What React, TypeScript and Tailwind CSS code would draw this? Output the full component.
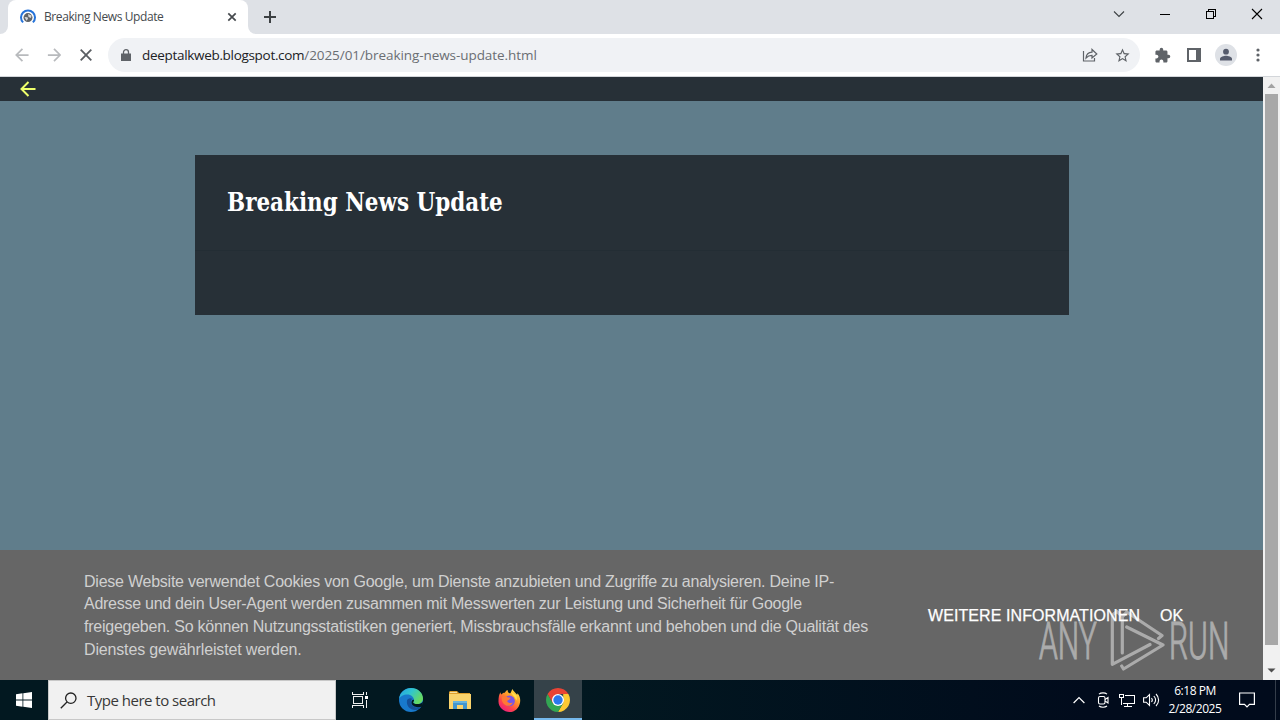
import type { ReactNode } from "react";

const ui = "font-['Open_Sans','Noto_Sans',sans-serif]";

function Arrow({ className, flip = false }: { className: string; flip?: boolean }) {
  return (
    <svg viewBox="0 0 16 16" className={className} fill="none" stroke="currentColor" strokeWidth="2">
      {flip ? <path d="M1 8h13M8 1l7 7-7 7" /> : <path d="M15.500 8H2M8.500 1l-7 7 7 7" />}
    </svg>
  );
}

function TitleBar() {
  return (
    <div className="flex h-[34px] shrink-0 items-stretch bg-[#dee1e6]">
      <div className="flex w-2 items-end bg-white">
        <div className="h-full w-2 rounded-br-lg bg-[#dee1e6]" />
      </div>
      <div className="w-60 bg-[#dee1e6]">
        <div className="flex h-full items-center rounded-t-lg bg-white pl-3 pr-[11px]">
          <svg viewBox="0 0 16 16" className="size-4 shrink-0">
            <path d="M3.1 13.4A7 7 0 1 1 12.9 13.4" fill="none" stroke="#2673d9" strokeWidth="2" />
            <circle cx="8" cy="8.600" r="4.500" fill="#5f6368" />
            <path d="M4.500 8l3 .3.5 1.500-1.500 2zM8 5l3.500 1.500-.5 2.500-2.500-1z" fill="#d5d7da" />
          </svg>
          <span className={`${ui} ml-2 flex-1 whitespace-nowrap text-[12px] tracking-[-0.400px] text-[#45494d]`}>
            Breaking News Update
          </span>
          <svg viewBox="0 0 10 10" className="size-[10px]" stroke="#45494d" strokeWidth="1.700">
            <path d="M1.300 1.300l7.400 7.400M8.700 1.300L1.300 8.700" />
          </svg>
        </div>
      </div>
      <div className="flex w-2 bg-white">
        <div className="h-full w-2 rounded-bl-lg bg-[#dee1e6]" />
      </div>
      <svg viewBox="0 0 12 12" className="ml-2 mt-[11px] size-3" stroke="#3c4043" strokeWidth="2">
        <path d="M6 0v12M0 6h12" />
      </svg>
      <div className="ml-auto flex pr-[17px] pt-[8px]">
        <svg viewBox="0 0 12 12" className="mr-[34px] size-3" fill="none" stroke="#3c4043" strokeWidth="1.100">
          <path d="M1 3.500l5 5 5-5" />
        </svg>
        <svg viewBox="0 0 12 12" className="mr-[34px] size-3" stroke="#000" shapeRendering="crispEdges">
          <path d="M1 6.500h10" />
        </svg>
        <svg viewBox="0 0 12 12" className="mr-[34px] size-3" fill="none" stroke="#000" shapeRendering="crispEdges">
          <path d="M1.500 3.500h7v7h-7zM3.500 3.500v-2h7v7h-2" />
        </svg>
        <svg viewBox="0 0 12 12" className="size-3" stroke="#000" strokeWidth="1.100">
          <path d="M1 1l10 10M11 1L1 11" />
        </svg>
      </div>
    </div>
  );
}

function Toolbar() {
  return (
    <div className="flex h-[43px] shrink-0 items-center border-b border-[#d3d6da] bg-white pl-[15px] pr-[13px]">
      <Arrow className="mr-[18px] size-[14px] text-[#b8babd]" />
      <Arrow flip className="mr-[19px] size-[14px] text-[#b8babd]" />
      <svg viewBox="0 0 12 12" className="mr-4 size-3" stroke="#5a5e63" strokeWidth="1.800">
        <path d="M.7.7l10.600 10.600M11.300.7L.7 11.300" />
      </svg>
      <div className="flex h-[34px] w-[1032px] items-center rounded-full bg-[#f0f2f5] pl-[13px] pr-[9px]">
        <svg viewBox="0 0 10 13" className="h-[13px] w-[10px]">
          <path d="M0 4.500h10V12H0z" fill="#5f6368" />
          <path d="M2.500 5V3.200a2.500 2.500 0 0 1 5 0V5" fill="none" stroke="#5f6368" strokeWidth="1.300" />
        </svg>
        <span className={`${ui} ml-[11px] flex-1 whitespace-nowrap text-[13.500px] text-[#6a6e73]`}>
          <span className="tracking-[-0.310px] text-[#202124]">deeptalkweb.blogspot.com</span>
          <span className="tracking-[-0.070px]">/2025/01/breaking-news-update.html</span>
        </span>
        <svg viewBox="0 0 16 16" className="mr-4 size-4" fill="none" stroke="#5f6368" strokeWidth="1.200">
          <path d="M1.500 4v10h11v-3M4 11c.3-3.600 2.500-5.700 6-5.800V2.500L14.800 7 10 11V8.300C7.400 8.300 5.500 9.200 4 11z" />
        </svg>
        <svg viewBox="0 0 24 24" className="size-[17px]" fill="#5f6368">
          <path d="M22 9.240l-7.190-.62L12 2 9.190 8.630 2 9.240l5.460 4.730L5.820 21 12 17.270 18.180 21l-1.630-7.030L22 9.240zM12 15.400l-3.760 2.270 1-4.280-3.320-2.880 4.380-.38L12 6.100l1.710 4.040 4.380.38-3.320 2.880 1 4.280L12 15.400z" />
        </svg>
      </div>
      <svg viewBox="0 0 24 24" className="ml-[14px] size-[17px]" fill="#5f6368">
        <path d="M20.500 11H19V7c0-1.100-.9-2-2-2h-4V3.500a2.500 2.500 0 0 0-5 0V5H4c-1.100 0-1.990.9-1.990 2v3.800H3.500c1.490 0 2.700 1.210 2.700 2.700s-1.210 2.700-2.700 2.700H2V20c0 1.100.9 2 2 2h3.800v-1.500c0-1.490 1.210-2.700 2.700-2.700s2.700 1.210 2.700 2.700V22H17c1.100 0 2-.9 2-2v-4h1.500a2.500 2.500 0 0 0 0-5z" />
      </svg>
      <svg viewBox="0 0 14 14" className="ml-4 size-[14px]">
        <path d="M1 1h12v12H1z" fill="none" stroke="#5f6368" strokeWidth="2" />
        <path d="M9 1h4v12H9z" fill="#5f6368" />
      </svg>
      <svg viewBox="0 0 22 22" className="ml-[14px] size-[22px]">
        <circle cx="11" cy="11" r="11" fill="#dee1e6" />
        <circle cx="11" cy="7.700" r="2.900" fill="#555b6c" />
        <path d="M5 16.500v-1.700c0-2 4-3 6-3s6 1 6 3v1.700z" fill="#555b6c" />
      </svg>
      <svg viewBox="0 0 4 14" className="ml-auto mr-[7px] h-[14px] w-1" fill="#5f6368">
        <circle cx="2" cy="2" r="1.600" />
        <circle cx="2" cy="7" r="1.600" />
        <circle cx="2" cy="12" r="1.600" />
      </svg>
    </div>
  );
}

function ScrollBar() {
  return (
    <div className="flex w-[17px] shrink-0 flex-col items-center bg-[#f1f1f1]">
      <svg viewBox="0 0 17 17" className="size-[17px]" fill="#a3a3a3">
        <path d="M4.500 11h8l-4-4.500z" />
      </svg>
      <div className="h-[551px] w-[13px] bg-[#a8a8a8]" />
      <svg viewBox="0 0 17 17" className="mt-auto mb-px size-[17px]" fill="#505050">
        <path d="M4.500 6.500h8l-4 4z" />
      </svg>
    </div>
  );
}

function Watermark() {
  return (
    <div className="absolute right-[32px] bottom-[9px] flex h-16 w-[192px] items-center text-white opacity-45 font-['Roboto',sans-serif]">
      <div className="w-[61px] pt-[5px]">
        <span className="block w-max origin-left scale-x-[0.590] text-[51px] leading-[64px] font-light [-webkit-text-stroke:1px_currentColor]">ANY</span>
      </div>
      <svg viewBox="0 0 56 64" className="ml-[9px] h-16 w-14 shrink-0" fill="none" stroke="currentColor" strokeWidth="3.200" strokeLinejoin="round" strokeLinecap="round">
        <path d="M13.300 46V10L17.700 5 53 28.500 49.500 31.500M13.300 10L8 4.500 3.300 8V57.300L41 37.500M17.700 20L54 38 14.500 62 12.700 59" />
      </svg>
      <div className="ml-1 w-[61px] pt-[5px]">
        <span className="block w-max origin-left scale-x-[0.590] text-[51px] leading-[64px] font-light [-webkit-text-stroke:1px_currentColor]">RUN</span>
      </div>
    </div>
  );
}

function CookieBar() {
  return (
    <div className="relative mt-auto flex h-[130px] items-center bg-[#666] pl-[84px] pt-[2px] font-['Liberation_Sans',sans-serif]">
      <p className="w-[800px] whitespace-nowrap text-[16px] leading-[22.700px] text-[#d0d0d0]">
        <span className="block tracking-[-0.240px]">Diese Website verwendet Cookies von Google, um Dienste anzubieten und Zugriffe zu analysieren. Deine IP-</span>
        <span className="block tracking-[-0.265px]">Adresse und dein User-Agent werden zusammen mit Messwerten zur Leistung und Sicherheit für Google</span>
        <span className="block tracking-[-0.245px]">freigegeben. So können Nutzungsstatistiken generiert, Missbrauchsfälle erkannt und behoben und die Qualität des</span>
        <span className="block tracking-[-0.160px]">Dienstes gewährleistet werden.</span>
      </p>
      <div className="ml-11 flex gap-5 text-[16px] text-white [-webkit-text-stroke:0.250px_currentColor]">
        <span className="w-[212px] whitespace-nowrap tracking-[0.080px]">WEITERE INFORMATIONEN</span>
        <span>OK</span>
      </div>
      <Watermark />
    </div>
  );
}

function Page() {
  return (
    <div className="flex min-h-0 flex-1">
      <div className="flex flex-1 flex-col bg-[#607d8b]">
        <div className="flex h-6 shrink-0 items-center bg-[#273037] pl-5">
          <Arrow className="size-4 text-[#eeff6b]" />
        </div>
        <div className="mt-[54px] ml-[195px] h-40 w-[874px] bg-[#273037]">
          <div className="h-[96px] border-b border-[#232d34] pl-8 pt-[30px]">
            <h1 className="w-max origin-left scale-x-[0.918] whitespace-nowrap text-[26px] leading-[35px] font-bold text-white font-['DejaVu_Serif_Condensed','DejaVu_Serif',serif]">
              Breaking News Update
            </h1>
          </div>
        </div>
        <CookieBar />
      </div>
      <ScrollBar />
    </div>
  );
}

function AppSlot({ children, active = false }: { children: ReactNode; active?: boolean }) {
  return (
    <div className={active ? "flex w-12 items-center justify-center border-b-2 border-[#76b9ed] bg-[#354249] pt-0.5" : "flex w-12 items-center justify-center"}>
      {children}
    </div>
  );
}

function EdgeIcon() {
  return (
    <svg viewBox="0 0 24 24" className="size-6">
      <defs>
        <linearGradient id="edgeTop" x1="0" y1="0" x2="1" y2="0.500">
          <stop offset="0" stopColor="#259fe5" />
          <stop offset="0.500" stopColor="#30c5cf" />
          <stop offset="1" stopColor="#67da61" />
        </linearGradient>
      </defs>
      <circle cx="12" cy="12" r="12" fill="#1879cc" />
      <path d="M0 11C1 4 6 0 12 0c7 0 12 5 12 10.500 0 3.500-2.500 5.500-5.800 5.500-2.700 0-4-.9-4-1.600 0-.5.8-.9.8-2.400C15 9 12 6.500 8.500 6.500 4.500 6.500 1 8.500 0 11z" fill="url(#edgeTop)" />
      <path d="M8 12.500c-1 5 3 9.500 8 9.500 3 0 5-1.500 6.500-3.500C18 21 13 18.500 12 15c-.5-2 .2-3.500 1.500-4.300C11 9.500 8.500 10.500 8 12.500z" fill="#145099" />
      <path d="M24.200 13c-1 2.600-3 3-6 3-2.700 0-4-.9-4-1.600 0-.5.8-.9.8-2.400-.9-.9-2.600.2-2.600 2.500 0 2.800 3.600 4.900 6.800 4.700 1.500-.1 2.600-.4 3.800-.8z" fill="#021820" />
    </svg>
  );
}

function FolderIcon() {
  return (
    <svg viewBox="0 0 22 20" className="h-5 w-[22px]">
      <path d="M0 2l1-1h7l2 2h11v4H0z" fill="#df9f2c" />
      <path d="M0 4h22v15H0z" fill="#fad36c" />
      <path d="M1 2.500h7" stroke="#f7e0a0" />
      <path d="M4 11h14v8h-4v-4H8v4H4z" fill="#4296cf" />
      <path d="M4 11h14v2H4z" fill="#67b4de" />
    </svg>
  );
}

function FirefoxIcon() {
  return (
    <svg viewBox="0 0 24 24" className="size-[23px]">
      <defs>
        <linearGradient id="foxBody" x1="0.900" y1="0" x2="0.200" y2="1">
          <stop offset="0" stopColor="#fff44f" />
          <stop offset="0.400" stopColor="#ff9a28" />
          <stop offset="0.700" stopColor="#ff4549" />
          <stop offset="1" stopColor="#e91985" />
        </linearGradient>
      </defs>
      <path d="M2.500 3.500c.2 1.200.5 1.700 1 2.300C4.500 4.500 5.500 4 7 4c1-2 2.300-2.800 3-3 0 2 1 3.500 3 3.500L15 0c1 2.500 3 3.500 5 6l.4-1.500C23 8 23.500 10.500 23 14c-1 6-5.500 10-11 10S.5 19.500.5 13C.5 9 1 6 2.500 3.500z" fill="url(#foxBody)" />
      <circle cx="12" cy="12.500" r="5.600" fill="#7655e6" />
      <path d="M4 8c3-1.500 4.500-.5 6 .5 1.500.4 3 .3 3 1.200 0 1.300-2.500 1.500-3.500 3 1.500 2.300 4 2.500 6 1-1 3.500-5 5-8 3S3.500 12 4 8z" fill="#ff7935" />
      <path d="M14 3c0 3 4.500 5 5 9 1-2 .8-3.500 0-5.500z" fill="#ffdf4c" />
    </svg>
  );
}

function ChromeIcon() {
  return (
    <svg viewBox="0 0 24 24" className="size-6">
      <path d="M22.390 6A12 12 0 0 1 12 24l5.200-9V6z" fill="#fcc934" />
      <path d="M1.610 6A12 12 0 0 0 12 24l5.200-9H6.800z" fill="#33a653" />
      <path d="M1.610 6A12 12 0 0 1 22.390 6H12v6l-5.200 3z" fill="#e94335" />
      <circle cx="12" cy="12" r="6" fill="#fff" />
      <circle cx="12" cy="12" r="4.700" fill="#2a78ed" />
    </svg>
  );
}

function TaskBar() {
  return (
    <div className={`${ui} flex h-10 shrink-0 items-stretch bg-linear-to-r from-[#021820] from-45% to-[#010b1c] to-85%`}>
      <div className="flex w-12 items-center justify-center">
        <svg viewBox="0 0 16 16" className="size-4" fill="#fff">
          <path d="M0 2.200l6.500-.9v6.300H0zM7.300 1.200L16 0v7.600H7.300zM0 8.400h6.500v6.300L0 13.800zM7.300 8.400H16V16l-8.700-1.200z" />
        </svg>
      </div>
      <div className="flex w-72 items-center border border-[#c8c8c8] bg-[#f1f1f1] pl-[11px]">
        <svg viewBox="0 0 17 17" className="size-[17px]" fill="none" stroke="#222" strokeWidth="1.300">
          <circle cx="10.800" cy="6.200" r="5.200" />
          <path d="M7 10L.8 16.200" />
        </svg>
        <span className="ml-[10px] whitespace-nowrap text-[15px] tracking-[-0.500px] text-[#383838]">Type here to search</span>
      </div>
      <AppSlot>
        <svg viewBox="0 0 17 16" className="mr-px h-4 w-[17px]" fill="none" stroke="#eee" shapeRendering="crispEdges">
          <path d="M1.500 0v2.500h11V0M2.500 4.500h9v7h-9zM1.500 16v-2.500h11V16M15.500 0v3M15.500 8v8" />
          <path d="M14 4h3v3h-3z" fill="#fff" stroke="none" />
        </svg>
      </AppSlot>
      <div className="ml-[3px] flex gap-px">
        <AppSlot><EdgeIcon /></AppSlot>
        <AppSlot><FolderIcon /></AppSlot>
        <AppSlot><FirefoxIcon /></AppSlot>
        <AppSlot active><ChromeIcon /></AppSlot>
      </div>
      <div className="ml-auto flex items-center text-white">
        <svg viewBox="0 0 12 8" className="h-2 w-3" fill="none" stroke="#fff" strokeWidth="1.200">
          <path d="M.6 7L6 1.500 11.400 7" />
        </svg>
        <svg viewBox="0 0 12 16" className="ml-3 h-4 w-3" fill="none" stroke="#fff" strokeWidth="1.100">
          <rect x="1.500" y="4.500" width="6.500" height="7.500" rx="1.500" />
          <path d="M8 7.500l3-2v5.500l-3-2M2 2.200C4 .4 8 .4 10 2.200M2 14c2 1.700 6 1.700 8 0" />
        </svg>
        <svg viewBox="0 0 17 15" className="ml-[10px] h-[15px] w-[17px]" fill="none" stroke="#fff" shapeRendering="crispEdges">
          <path d="M5.500 2.500h10v8h-12M8.500 10.500v3M5 13.500h8M.5 1.500h4v3h-4zM2.500 4.500v7" />
        </svg>
        <svg viewBox="0 0 17 14" className="ml-[7px] h-[14px] w-[17px]" fill="none" stroke="#fff" strokeWidth="1.100">
          <path d="M.6 4.800h2.600L6.500 1.500v11L3.200 9.200H.6zM8.500 5c1 1.200 1 2.800 0 4M10.800 3c2.200 2.400 2.200 5.600 0 8M13 1c3.500 3.500 3.500 8.500 0 12" />
        </svg>
        <div className="ml-[7px] flex w-[56px] flex-col items-center whitespace-nowrap text-[12px] leading-[18px] tracking-[-0.450px]">
          <span>6:18 PM</span>
          <span>2/28/2025</span>
        </div>
        <svg viewBox="0 0 16 16" className="ml-[16px] h-4 w-4" fill="none" stroke="#fff" strokeWidth="1.200">
          <path d="M.6 1h14.800v11.400H10.500L8 15l-2.500-2.600H.6z" />
        </svg>
        <div className="ml-5 mr-[4px] h-10 w-px bg-[#343d4a]" />
      </div>
    </div>
  );
}

export default function App() {
  return (
    <div className="flex h-[720px] w-[1280px] flex-col overflow-hidden">
      <TitleBar />
      <Toolbar />
      <Page />
      <TaskBar />
    </div>
  );
}
